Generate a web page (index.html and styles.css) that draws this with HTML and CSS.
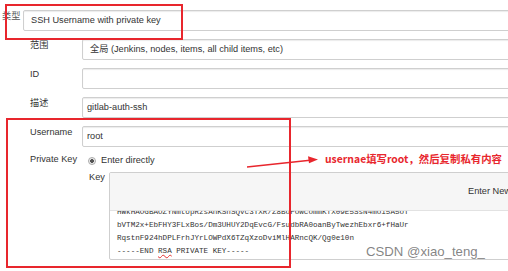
FILE: index.html
```html
<!DOCTYPE html>
<html>
<head>
<meta charset="utf-8">
<link rel="stylesheet" href="styles.css">
</head>
<body>
<div class="page">
  <div class="top">
    <span class="top-lbl">类型</span>
    <div class="field sel">SSH Username with private key</div>
  </div>
  <div class="form">
    <div class="row"><span class="lbl">范围</span><div class="field sel">全局 (Jenkins, nodes, items, all child items, etc)</div></div>
    <div class="row"><span class="lbl">ID</span><div class="field"></div></div>
    <div class="row"><span class="lbl">描述</span><div class="field">gitlab-auth-ssh</div></div>
    <div class="row"><span class="lbl">Username</span><div class="field">root</div></div>
    <div class="row pk"><span class="lbl">Private Key</span><span class="radio"><span class="dot"></span>Enter directly</span></div>
    <div class="row keyrow">
      <span class="keylbl">Key</span>
      <div class="keybox">
        <div class="keyhead">Enter New Secret Below</div>
        <div class="keytext"><pre>HWkHAOGBAOZYNmtopRzsAnKSnSQvc3TXR/Z8BUFUwcUmmKTX09E5SsN4mU15A5UT
bVTM2x+EbFHY3FLxBos/Dm3UHUY2DqEvcG/FsudbRA0oanByTwezhEbxr6+fHaUr
RqstnF924hDPLFrhJYrLOWPdX6TZqXzoDviMlHARncQK/Qg0e10n
-----END <span class="sp">RSA</span> PRIVATE KEY-----</pre></div>
      </div>
    </div>
  </div>

  <div class="anno box1"></div>
  <div class="anno box2"></div>
  <svg class="arrow" width="508" height="271" viewBox="0 0 508 271">
    <line x1="247" y1="167" x2="310" y2="160.3" stroke="#e8262d" stroke-width="1.6"/>
    <polygon points="318,159.5 308,156.3 309,163.3" fill="#e8262d"/>
  </svg>
  <div class="note">usernae填写root，然后复制私有内容</div>
  <div class="wm">CSDN @xiao_teng_</div>
</div>
</body>
</html>
```

FILE: styles.css
```css
html, body {
  margin: 0;
  padding: 0;
  background: #fff;
}
body {
  width: 508px;
  height: 271px;
  overflow: hidden;
  font-family: "Liberation Sans", Arial, "Noto Sans CJK SC", sans-serif;
  font-size: 9.2px;
  color: #333;
}
.page {
  position: relative;
  width: 508px;
  height: 271px;
  overflow: hidden;
}
.top {
  display: flex;
  padding: 10px 0 0 2px;
}
.top-lbl {
  width: 21px;
  flex: none;
  line-height: 11px;
  padding-top: 1px;
  color: #555;
}
.field {
  flex: 1;
  margin-right: -40px;
  height: 21px;
  box-sizing: border-box;
  border: 1px solid #cfcfcf;
  border-radius: 2px;
  box-shadow: inset 0 1px 1px rgba(0, 0, 0, 0.08);
  line-height: 19px;
  padding-left: 4px;
  white-space: nowrap;
  overflow: hidden;
  background: #fff;
}
.field.sel {
  padding-left: 7px;
}
.form {
  padding: 8px 0 0 30px;
  display: flex;
  flex-direction: column;
  gap: 8px;
}
.row {
  display: flex;
}
.lbl {
  width: 52px;
  flex: none;
  line-height: 11px;
  padding-top: 1px;
}
.pk {
  margin-top: -2px;
  height: 11px;
}
.radio {
  display: flex;
  align-items: center;
  gap: 5px;
  margin-left: 6px;
  padding-top: 2px;
  line-height: 11px;
  height: 11px;
}
.dot {
  width: 8px;
  height: 8px;
  box-sizing: border-box;
  border-radius: 50%;
  border: 1px solid #aaa;
  background: radial-gradient(circle, #555 0 1.6px, #eee 2.2px);
}
.keyrow {
  padding-left: 59px;
}
.keylbl {
  width: 20px;
  flex: none;
  line-height: 11px;
}
.keybox {
  flex: 1;
  margin-right: -60px;
  height: 88px;
  box-sizing: border-box;
  border: 1px solid #cfcfcf;
  border-radius: 2px;
  display: flex;
  flex-direction: column;
  overflow: hidden;
}
.keyhead {
  height: 37px;
  flex: none;
  background: #f6f6f6;
  border-bottom: 1px solid #e2e2e2;
  padding-left: 358px;
  line-height: 37px;
  white-space: nowrap;
}
.keytext {
  flex: 1;
  overflow: hidden;
}
.keytext pre {
  margin: -5px 0 0 7px;
  font-family: "Liberation Mono", "Courier New", monospace;
  font-size: 7.6px;
  line-height: 13px;
  color: #333;
}
.sp {
  text-decoration: underline wavy #e53030;
  text-decoration-thickness: 1px;
}
.anno {
  position: absolute;
  border: 2px solid #e8262d;
  box-sizing: border-box;
}
.box1 {
  left: 5px;
  top: 4px;
  width: 178px;
  height: 36px;
}
.box2 {
  left: 6px;
  top: 118px;
  width: 285px;
  height: 150px;
}
.arrow {
  position: absolute;
  left: 0;
  top: 0;
}
.note {
  position: absolute;
  left: 325px;
  top: 151px;
  font-family: "Noto Sans CJK SC", sans-serif;
  font-size: 10.4px;
  font-weight: bold;
  line-height: 15px;
  color: #e8262d;
  white-space: nowrap;
}
.wm {
  position: absolute;
  left: 366px;
  top: 244px;
  font-family: "Liberation Sans", Arial, sans-serif;
  font-size: 13.2px;
  line-height: 16px;
  color: rgba(110, 110, 110, 0.85);
  white-space: nowrap;
}
```
